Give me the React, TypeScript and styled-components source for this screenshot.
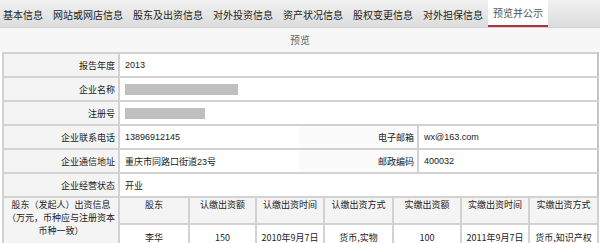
import React from "react";
import styled, { createGlobalStyle } from "styled-components";

const GlobalStyle = createGlobalStyle`
  html, body {
    margin: 0;
    padding: 0;
    background: #ffffff;
  }
  body {
    font-family: "Liberation Sans", "Noto Sans CJK SC", sans-serif;
    color: #333;
  }
`;

const tabs = [
  "基本信息",
  "网站或网店信息",
  "股东及出资信息",
  "对外投资信息",
  "资产状况信息",
  "股权变更信息",
  "对外担保信息",
  "预览并公示",
];

const App: React.FC = () => {
  return (
    <Page>
      <GlobalStyle />
      <TabBar>
        {tabs.map((t, i) => (
          <Tab key={t} active={i === tabs.length - 1}>
            {t}
          </Tab>
        ))}
      </TabBar>
      <Caption>预览</Caption>
      <Body>
        <InfoTable>
          <colgroup>
            <col style={{ width: 116 }} />
            <col style={{ width: 180 }} />
            <col style={{ width: 119 }} />
            <col style={{ width: 180 }} />
          </colgroup>
          <tbody>
            <tr>
              <Label>报告年度</Label>
              <Value colSpan={3}>2013</Value>
            </tr>
            <tr>
              <Label>企业名称</Label>
              <Value colSpan={3}>
                <Redacted w={113} />
              </Value>
            </tr>
            <tr>
              <Label>注册号</Label>
              <Value colSpan={3}>
                <Redacted w={80} />
              </Value>
            </tr>
            <tr>
              <Label>企业联系电话</Label>
              <Value open>13896912145</Value>
              <Label open>电子邮箱</Label>
              <Value>wx@163.com</Value>
            </tr>
            <tr>
              <Label>企业通信地址</Label>
              <Value open>重庆市同路口街道23号</Value>
              <Label open>邮政编码</Label>
              <Value>400032</Value>
            </tr>
            <tr>
              <Label>企业经营状态</Label>
              <Value colSpan={3}>开业</Value>
            </tr>
          </tbody>
        </InfoTable>
        <ShareTable>
          <colgroup>
            <col style={{ width: 116 }} />
            <col style={{ width: 70 }} />
            <col style={{ width: 67 }} />
            <col style={{ width: 68 }} />
            <col style={{ width: 69 }} />
            <col style={{ width: 68 }} />
            <col style={{ width: 68 }} />
            <col style={{ width: 69 }} />
          </colgroup>
          <tbody>
            <tr>
              <GroupLabel rowSpan={2}>
                股东（发起人）出资信息（万元，币种应与注册资本币种一致）
              </GroupLabel>
              <Head>股东</Head>
              <Head>认缴出资额</Head>
              <Head>认缴出资时间</Head>
              <Head>认缴出资方式</Head>
              <Head>实缴出资额</Head>
              <Head>实缴出资时间</Head>
              <Head>实缴出资方式</Head>
            </tr>
            <tr>
              <Cell>李华</Cell>
              <Cell>150</Cell>
              <Cell>2010年9月7日</Cell>
              <Cell>货币,实物</Cell>
              <Cell>100</Cell>
              <Cell>2011年9月7日</Cell>
              <Cell>货币,知识产权</Cell>
            </tr>
          </tbody>
        </ShareTable>
      </Body>
    </Page>
  );
};

export default App;

const Page = styled.div`
  width: 600px;
  height: 243px;
  overflow: hidden;
  background: #fff;
`;

const TabBar = styled.div`
  display: flex;
  height: 28px;
  background: linear-gradient(#f1f1f1, #dcdcdc);
  border-bottom: 1px solid #d0d0d0;
  box-sizing: border-box;
  margin-left: -2px;
`;

const Tab = styled.div<{ active?: boolean }>`
  display: flex;
  align-items: center;
  padding: 0 5px;
  font-size: 10px;
  font-family: "Noto Sans CJK SC", sans-serif;
  color: ${(p) => (p.active ? "#555" : "#222")};
  background: ${(p) => (p.active ? "#ffffff" : "transparent")};
  border-bottom: ${(p) => (p.active ? "2px solid #b0323a" : "none")};
  box-sizing: border-box;
  height: ${(p) => (p.active ? "27px" : "28px")};
  white-space: nowrap;
`;

const Caption = styled.div`
  height: 24px;
  line-height: 24px;
  text-align: center;
  font-size: 10px;
  font-family: "Noto Sans CJK SC", sans-serif;
  color: #666;
  background: #f7f7f7;
`;

const Body = styled.div`
  margin: 0 3px 0 2px;
`;

const InfoTable = styled.table`
  width: 595px;
  table-layout: fixed;
  border-collapse: collapse;
  font-size: 9px;
  border: 2px solid #cfcfcf;
`;

const Label = styled.td<{ open?: boolean }>`
  height: 22px;
  padding: 0 3px 0 0;
  text-align: right;
  color: #222;
  font-family: "Noto Sans CJK SC", sans-serif;
  background: ${(p) => (p.open ? "#fbfbfb" : "#f4f4f4")};
  border-top: 2px solid #d2d2d2;
  border-bottom: 2px solid #d2d2d2;
  border-left: ${(p) => (p.open ? "none" : "2px solid #d2d2d2")};
  border-right: 2px solid #d2d2d2;
  white-space: nowrap;
`;

const Value = styled.td<{ open?: boolean }>`
  height: 22px;
  padding: 0 5px;
  text-align: left;
  color: #222;
  background: #fff;
  border-top: 2px solid #d2d2d2;
  border-bottom: 2px solid #d2d2d2;
  border-right: ${(p) => (p.open ? "none" : "2px solid #c4c4c4")};
  white-space: nowrap;
`;

const Redacted = styled.span<{ w: number }>`
  display: inline-block;
  vertical-align: middle;
  width: ${(p) => p.w}px;
  height: 11px;
  background: #bfbfbf;
`;

const ShareTable = styled.table`
  width: 595px;
  table-layout: fixed;
  border-collapse: collapse;
  font-size: 9px;
  font-family: "Noto Sans CJK SC", sans-serif;
  border: 2px solid #cfcfcf;
  border-top: none;
`;

const GroupLabel = styled.td`
  vertical-align: top;
  text-align: center;
  padding: 0 1px;
  line-height: 13px;
  color: #222;
  background: #f4f4f4;
  border: 2px solid #d2d2d2;
  border-top: none;
`;

const Head = styled.td`
  height: 24px;
  vertical-align: top;
  padding-top: 0;
  line-height: 13px;
  text-align: center;
  color: #222;
  background: #f4f4f4;
  border: 2px solid #d2d2d2;
  border-top: none;
  white-space: nowrap;
  overflow: hidden;
`;

const Cell = styled.td`
  height: 22px;
  text-align: center;
  color: #222;
  background: #fff;
  border: 2px solid #d2d2d2;
  white-space: nowrap;
  overflow: hidden;
`;
